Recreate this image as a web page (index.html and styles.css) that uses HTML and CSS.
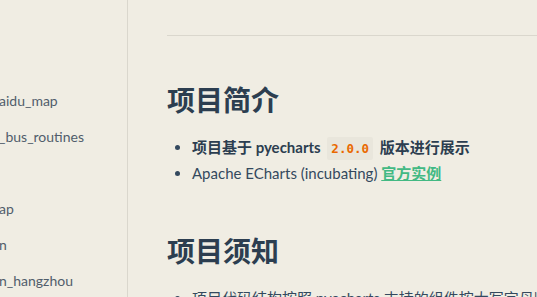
FILE: index.html
```html
<!DOCTYPE html>
<html lang="zh-CN">
<head>
  <meta charset="UTF-8" />
  <meta name="viewport" content="width=device-width, initial-scale=1.0" />
  <title>pyecharts 示例</title>
  <link rel="stylesheet" href="styles.css">
</head>
<body>
  <aside class="sidebar">
    <ul class="nav">
      <li>aidu_map</li>
      <li>_bus_routines</li>
      <li></li>
      <li>ap</li>
      <li>n</li>
      <li>n_hangzhou</li>
    </ul>
  </aside>
  <main class="content">
    <hr class="rule" />
    <h2>项目简介</h2>
    <ul class="points">
      <li><strong>项目基于 pyecharts <code>2.0.0</code> 版本进行展示</strong></li>
      <li>Apache ECharts (incubating) <a href="#">官方实例</a></li>
    </ul>
    <h2>项目须知</h2>
    <ul class="points">
      <li>项目代码结构按照 pyecharts 支持的组件按大写字母顺序排列</li>
    </ul>
  </main>
</body>
</html>
```

FILE: styles.css
```css
body {
  margin: 0;
  display: flex;
  height: 100vh;
  overflow: hidden;
  background-color: #f0ede3;
  color: #34495e;
  font-family: Lato, "Noto Sans CJK SC", sans-serif;
  font-size: 15px;
}
.sidebar {
  width: 127px;
  flex-shrink: 0;
  border-right: 1px solid #dad7cd;
  overflow: hidden;
  padding-top: 83px;
}
.nav {
  list-style: none;
  margin: 0 0 0 -1px;
  padding: 0;
  white-space: nowrap;
}
.nav li {
  height: 36px;
  line-height: 36px;
  font-size: 14px;
  color: #505d6b;
}
.content {
  flex: 1;
  padding-left: 39px;
  overflow: hidden;
  white-space: nowrap;
}
.rule {
  margin: 35px 0 0;
  border: none;
  border-top: 1px solid #dad7cd;
}
h2 {
  margin: 44px 0 0;
  font-size: 28px;
  line-height: 40px;
  font-weight: 700;
  color: #2c3e50;
}
.points {
  margin: 14px 0 0;
  padding-left: 25px;
  line-height: 26px;
}
.points li {
  height: 26px;
}
.points + h2 {
  margin-top: 45px;
}
strong {
  font-weight: 700;
  color: #2c3e50;
}
code {
  font-family: "DejaVu Sans Mono", monospace;
  font-size: 12.5px;
  color: #e96900;
  background-color: #e9e6dc;
  border-radius: 2px;
  padding: 4px 4px;
  margin: 0 3px;
}
a {
  color: #42b983;
  font-weight: 700;
  text-decoration: underline;
}
```
